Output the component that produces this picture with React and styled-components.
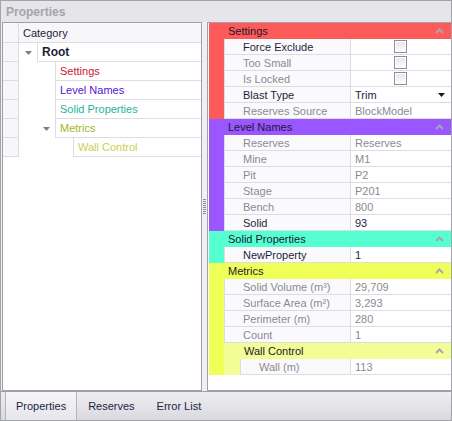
import React from "react";
import styled, { createGlobalStyle } from "styled-components";

const GlobalStyle = createGlobalStyle`
    html, body {
        margin: 0;
        padding: 0;
        background: #ffffff;
    }
    body {
        font-family: "Liberation Sans", Arial, sans-serif;
        font-size: 11px;
    }
`;

const Frame = styled.div`
    width: 452px;
    height: 421px;
    box-sizing: border-box;
    border: 1px solid #a3a3ab;
    display: flex;
    flex-direction: column;
    background: #f0f0f2;
`;

const TitleBar = styled.div`
    height: 21px;
    flex: none;
    display: flex;
    align-items: center;
    padding-left: 5px;
    background: #e6e6ea;
    color: #a4a4ad;
    font-weight: bold;
    font-size: 12px;
`;

const Body = styled.div`
    flex: 1;
    min-height: 0;
    display: flex;
    padding-left: 1px;
`;

const TreePanel = styled.div`
    width: 200px;
    flex: none;
    box-sizing: border-box;
    border: 1px solid #a0a0a8;
    background: #ffffff;
`;

const Splitter = styled.div`
    width: 5px;
    flex: none;
    display: flex;
    align-items: center;
    justify-content: center;
`;

const Grip = styled.div`
    width: 3px;
    height: 16px;
    background: repeating-linear-gradient(
        to bottom,
        #8c8c96 0px,
        #8c8c96 1px,
        transparent 1px,
        transparent 2px
    );
`;

const GridPanel = styled.div`
    flex: 1;
    box-sizing: border-box;
    border: 1px solid #a0a0a8;
    border-right: none;
    padding-left: 1px;
    background: #ffffff;
`;

/* ---------- tree ---------- */

const TreeRow = styled.div`
    display: flex;
    height: ${(p) => (p.$header ? 20 : 19)}px;
`;

const Indicator = styled.div`
    width: 16px;
    flex: none;
    box-sizing: border-box;
    border-right: 1px solid #dcdce2;
    border-bottom: 1px solid #dcdce2;
    background: #f7f7f9;
`;

const Indent = styled.div`
    width: ${(p) => p.$level * 18}px;
    flex: none;
    display: flex;
    justify-content: flex-end;
    align-items: center;
`;

const ExpandBtn = styled.div`
    width: 18px;
    display: flex;
    justify-content: center;
    align-items: center;
`;

const TreeCell = styled.div`
    flex: 1;
    box-sizing: border-box;
    display: flex;
    align-items: center;
    padding-left: 4px;
    border-left: ${(p) => (p.$header ? "none" : "1px solid #dcdce2")};
    border-bottom: 1px solid #dcdce2;
    background: ${(p) => (p.$header ? "#f7f7f9" : "#ffffff")};
    color: ${(p) => p.$color || "#1e1e3c"};
    font-weight: ${(p) => (p.$bold ? "bold" : "normal")};
    font-size: ${(p) => (p.$bold ? 12 : 11)}px;
`;

/* ---------- property grid ---------- */

const Category = styled.div`
    background: ${(p) => p.$color};
    padding-left: ${(p) => p.$inset}px;
`;

const CategoryHeader = styled.div`
    height: 16px;
    display: flex;
    align-items: center;
    justify-content: space-between;
    padding: 0 7px 0 4px;
    color: #1a1a30;
    margin-left: ${(p) => (p.$nested ? 0 : 0)}px;
`;

const PropRow = styled.div`
    display: flex;
    height: 16px;
    background: #ffffff;
`;

const NameCell = styled.div`
    flex: 1;
    box-sizing: border-box;
    display: flex;
    align-items: center;
    padding-left: 18px;
    border-left: 1px solid #dcdce2;
    border-bottom: 1px solid #dcdce2;
    background: #fafafc;
    color: ${(p) => (p.$muted ? "#8a8a94" : "#1e1e3c")};
    white-space: nowrap;
`;

const ValueCell = styled.div`
    width: 101px;
    flex: none;
    box-sizing: border-box;
    display: flex;
    align-items: center;
    justify-content: ${(p) => (p.$center ? "center" : "space-between")};
    padding: 0 6px 0 4px;
    border-left: 1px solid #dcdce2;
    border-bottom: 1px solid #dcdce2;
    color: ${(p) => (p.$muted ? "#8a8a94" : "#1e1e3c")};
`;

const CheckBox = styled.span`
    width: 13px;
    height: 13px;
    box-sizing: border-box;
    border: 1px solid #8e8e98;
    background: linear-gradient(#e4e4e9, #ffffff);
    box-shadow: inset 0 0 0 1px #ffffff;
`;

/* ---------- tabs ---------- */

const TabStrip = styled.div`
    height: 29px;
    flex: none;
    box-sizing: border-box;
    display: flex;
    padding-left: 4px;
    border-top: 1px solid #a0a0a8;
    background: linear-gradient(#eeeef2, #d9d9df);
`;

const Tab = styled.div`
    display: flex;
    align-items: center;
    padding: 0 10px;
    color: #1e1e46;
    box-sizing: border-box;
    border-left: 1px solid ${(p) => (p.$active ? "#b4b4bc" : "transparent")};
    border-right: 1px solid ${(p) => (p.$active ? "#b4b4bc" : "transparent")};
    background: ${(p) =>
        p.$active ? "linear-gradient(#f6f6f9, #e6e6eb)" : "transparent"};
`;

const DownArrow = ({ color = "#7c7c86" }) => (
    <svg width="7" height="4" viewBox="0 0 7 4">
        <polygon points="0,0 7,0 3.5,4" fill={color} />
    </svg>
);

const Chevron = () => (
    <svg width="9" height="6" viewBox="0 0 9 6">
        <polyline
            points="1,5 4.5,1.5 8,5"
            fill="none"
            stroke="#a6a6b2"
            strokeWidth="2"
        />
    </svg>
);

const treeItems = [
    { label: "Root", level: 1, bold: true, expanded: true },
    { label: "Settings", level: 2, color: "#cc1630" },
    { label: "Level Names", level: 2, color: "#5414d2" },
    { label: "Solid Properties", level: 2, color: "#1eb59a" },
    { label: "Metrics", level: 2, color: "#a6b41c", expanded: true },
    { label: "Wall Control", level: 3, color: "#c9cf52" },
];

const categories = [
    {
        name: "Settings",
        color: "#ff5a5a",
        rows: [
            { name: "Force Exclude", check: true },
            { name: "Too Small", check: true, muted: true },
            { name: "Is Locked", check: true, muted: true },
            { name: "Blast Type", value: "Trim", dropdown: true },
            { name: "Reserves Source", value: "BlockModel", muted: true },
        ],
    },
    {
        name: "Level Names",
        color: "#9a56ff",
        rows: [
            { name: "Reserves", value: "Reserves", muted: true },
            { name: "Mine", value: "M1", muted: true },
            { name: "Pit", value: "P2", muted: true },
            { name: "Stage", value: "P201", muted: true },
            { name: "Bench", value: "800", muted: true },
            { name: "Solid", value: "93" },
        ],
    },
    {
        name: "Solid Properties",
        color: "#56ffd2",
        rows: [{ name: "NewProperty", value: "1" }],
    },
    {
        name: "Metrics",
        color: "#efff58",
        rows: [
            { name: "Solid Volume (m³)", value: "29,709", muted: true },
            { name: "Surface Area (m²)", value: "3,293", muted: true },
            { name: "Perimeter (m)", value: "280", muted: true },
            { name: "Count", value: "1", muted: true },
        ],
        children: [
            {
                name: "Wall Control",
                color: "#f3fd96",
                rows: [{ name: "Wall (m)", value: "113", muted: true }],
            },
        ],
    },
];

function Row({ row }) {
    return (
        <PropRow>
            <NameCell $muted={row.muted}>{row.name}</NameCell>
            {row.check ? (
                <ValueCell $center>
                    <CheckBox />
                </ValueCell>
            ) : (
                <ValueCell $muted={row.muted}>
                    <span>{row.value}</span>
                    {row.dropdown && <DownArrow color="#1a1a24" />}
                </ValueCell>
            )}
        </PropRow>
    );
}

function CategoryBlock({ cat, inset }) {
    return (
        <Category $color={cat.color} $inset={inset}>
            <CategoryHeader>
                <span>{cat.name}</span>
                <Chevron />
            </CategoryHeader>
            {cat.rows.map((r) => (
                <Row key={r.name} row={r} />
            ))}
            {(cat.children || []).map((c) => (
                <CategoryBlock key={c.name} cat={c} inset={16} />
            ))}
        </Category>
    );
}

export default function App() {
    return (
        <>
            <GlobalStyle />
            <Frame>
                <TitleBar>Properties</TitleBar>
                <Body>
                    <TreePanel>
                        <TreeRow $header>
                            <Indicator />
                            <TreeCell $header>Category</TreeCell>
                        </TreeRow>
                        {treeItems.map((item) => (
                            <TreeRow key={item.label}>
                                <Indicator />
                                <Indent $level={item.level}>
                                    {item.expanded && (
                                        <ExpandBtn>
                                            <DownArrow />
                                        </ExpandBtn>
                                    )}
                                </Indent>
                                <TreeCell
                                    $color={item.color}
                                    $bold={item.bold}
                                >
                                    {item.label}
                                </TreeCell>
                            </TreeRow>
                        ))}
                    </TreePanel>
                    <Splitter>
                        <Grip />
                    </Splitter>
                    <GridPanel>
                        {categories.map((c) => (
                            <CategoryBlock key={c.name} cat={c} inset={15} />
                        ))}
                    </GridPanel>
                </Body>
                <TabStrip>
                    <Tab $active>Properties</Tab>
                    <Tab>Reserves</Tab>
                    <Tab>Error List</Tab>
                </TabStrip>
            </Frame>
        </>
    );
}
